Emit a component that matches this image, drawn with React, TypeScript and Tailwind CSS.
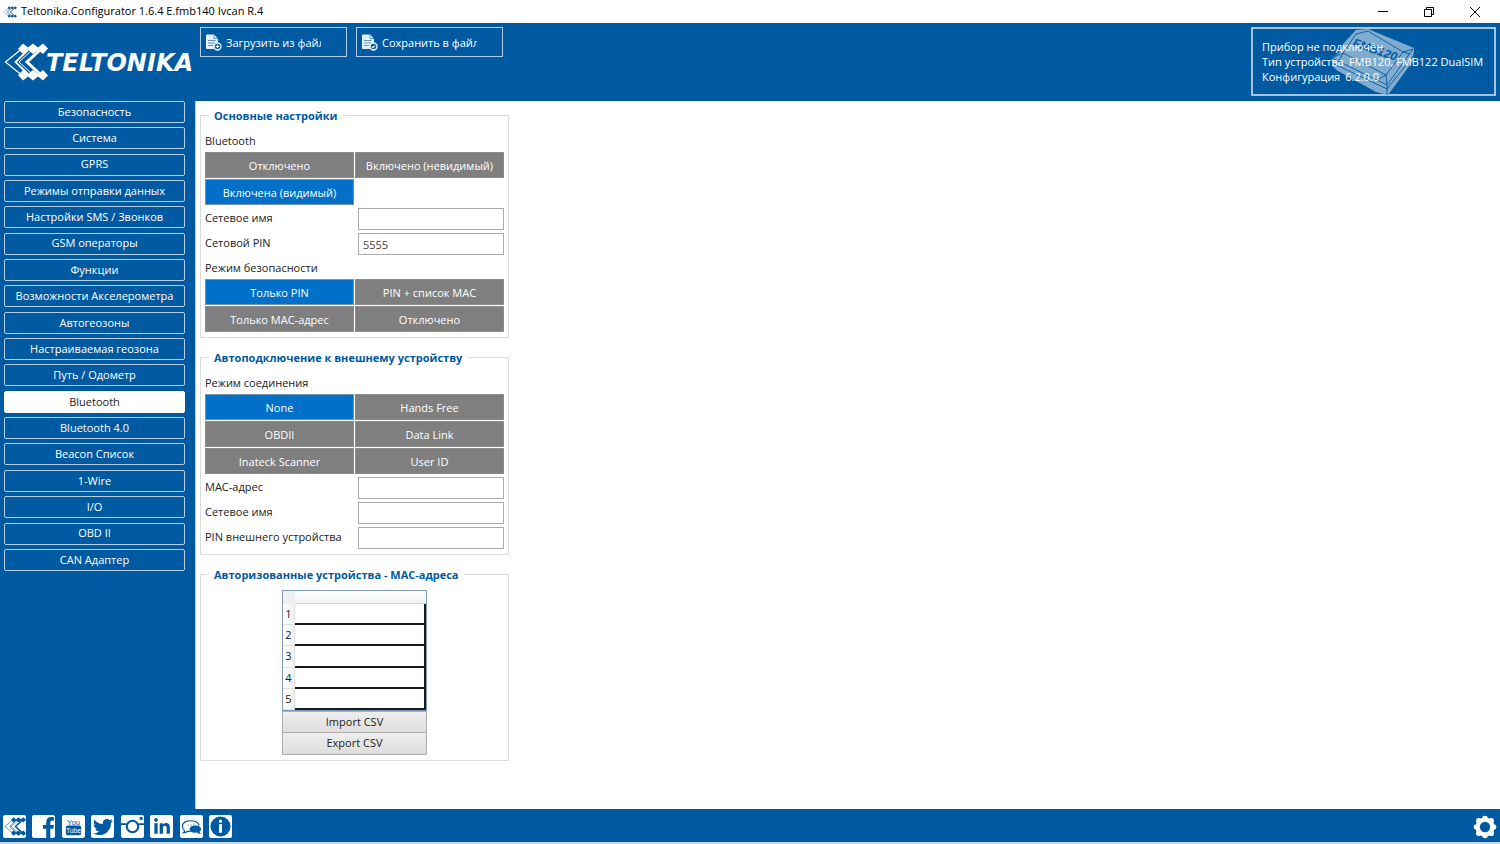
import { useState } from "react";
import type { ReactNode } from "react";
import { FaFacebookF, FaLinkedinIn, FaTwitter } from "react-icons/fa";

const NAV = [
  "Безопасность",
  "Система",
  "GPRS",
  "Режимы отправки данных",
  "Настройки SMS / Звонков",
  "GSM операторы",
  "Функции",
  "Возможности Акселерометра",
  "Автогеозоны",
  "Настраиваемая геозона",
  "Путь / Одометр",
  "Bluetooth",
  "Bluetooth 4.0",
  "Beacon Список",
  "1-Wire",
  "I/O",
  "OBD II",
  "CAN Адаптер",
];

function LogoMark({ className }: { className: string }) {
  return (
    <svg viewBox="0 0 44 38" className={className} aria-hidden="true">
      <g fill="none" stroke="currentColor">
        <path d="M17 6.500 L1.500 19 L17 31.500" strokeWidth="1.200" />
        <path d="M24 7 L11.500 19 L24 31" strokeWidth="1.800" />
        <path d="M27 8 L15 19 L27 30" strokeWidth="1" />
        <path d="M36 7 L23 19 L36 31" strokeWidth="3" />
      </g>
      <g fill="currentColor">
        <path d="M19 0.500l5 4 5-4 5 4 5-4 5 5-5 5.500-5-4-5 4-5-4-5 4-5-5z" />
        <path d="M19 37.500l5-4 5 4 5-4 5 4 5-5-5-5.500-5 4-5-4-5 4-5-4-5 5z" />
      </g>
    </svg>
  );
}

function FileIcon({ mark }: { mark: "plus" | "check" }) {
  return (
    <svg viewBox="0 0 16 17" className="h-[17px] w-4 shrink-0" aria-hidden="true">
      <path d="M1 0.500h7l4 4v9.500a1 1 0 0 1-1 1H1a1 1 0 0 1-1-1V1.500a1 1 0 0 1 1-1z" fill="#e8f0f7" />
      <path d="M8 0.500v4h4M2 6.500h7.500M2 9h7.500M2 11.500h5" fill="none" stroke="#5c95c4" strokeWidth="1" />
      <circle cx="11.500" cy="12.500" r="3.500" fill="#005aa1" stroke="#e8f0f7" strokeWidth="1.400" />
      <path d={mark === "plus" ? "M11.500 10.700v3.600M9.700 12.500h3.600" : "M9.900 12.500l1.200 1.200 2-2.200"} fill="none" stroke="#fff" strokeWidth="1.100" />
    </svg>
  );
}

function DeviceDrawing() {
  return (
    <svg viewBox="0 0 86 66" className="absolute left-[77px] top-0 h-[66px] w-[86px]" aria-hidden="true">
      <path d="M26 1 L38 0 L84 19 L83 32 L58 66 L46 63 L8 42 L2 37 L2 29 L9 24 L13 15z" fill="#80acd0" />
      <g fill="none" stroke="#005aa1" strokeWidth="0.900">
        <path d="M38 2 L26 5 L13 24 L2 29 L57 56 L83 20 L73 23 L38 2" />
        <path d="M2 34 L57 60 L84 26M57 56v10M13 24L9 32M13 24 L56 46 L73 23L80 25M56 46L47 51M56 46l1 10" />
      </g>
      <text x="22" y="17" transform="rotate(19 22 17)" fill="#005aa1" className="font-['Liberation_Sans'] text-[12px] font-bold italic">
        FMB120
      </text>
    </svg>
  );
}

function YoutubeIcon() {
  return (
    <svg viewBox="0 0 24 24" className="size-[23px]" aria-hidden="true">
      <text x="12" y="10" textAnchor="middle" fill="currentColor" className="font-['Liberation_Sans_Narrow','Liberation_Sans'] text-[8px]">You</text>
      <rect x="4" y="11" width="16" height="10" rx="2" fill="currentColor" />
      <text x="12" y="19" textAnchor="middle" fill="#fff" className="font-['Liberation_Sans_Narrow','Liberation_Sans'] text-[7px]">Tube</text>
    </svg>
  );
}

function CameraIcon() {
  return (
    <svg viewBox="0 0 24 24" className="size-[23px]" aria-hidden="true">
      <path d="M0 9.500h6M18 9.500h6" stroke="currentColor" strokeWidth="2" />
      <circle cx="12" cy="12" r="6" fill="none" stroke="currentColor" strokeWidth="2.200" />
      <rect x="19.500" y="2" width="3" height="3" fill="currentColor" />
    </svg>
  );
}

function ChatIcon() {
  return (
    <svg viewBox="0 0 24 24" className="size-[23px]" aria-hidden="true">
      <path d="M5 17l-1.500 1.500c2 0 3.500-.5 4.500-1.500h3M5 16.500C3 15.300 2.500 13.500 2.500 11.500 2.500 8 6.500 6 11 6s8.500 2 9 5" fill="none" stroke="currentColor" strokeWidth="1.300" />
      <path d="M16 11c3.500 0 6 1.600 6 3.800 0 1.300-.8 2.200-1.800 2.800l1.500 2.200c-2 0-3.200-.7-4-1.500-4.500.6-7.700-1-7.700-3.500C10 12.600 12.500 11 16 11z" fill="currentColor" />
      <path d="M8 10.500h1M11 10.500h1M14 9.500h1" stroke="currentColor" />
    </svg>
  );
}

function InfoIcon() {
  return (
    <svg viewBox="0 0 24 24" className="size-[23px]" aria-hidden="true">
      <circle cx="12" cy="12" r="10.500" fill="currentColor" />
      <rect x="10.500" y="9.500" width="3" height="9" fill="#fff" />
      <rect x="10.500" y="5" width="3" height="3" rx="1" fill="#fff" />
    </svg>
  );
}

function GearIcon() {
  return (
    <svg viewBox="0 0 24 24" className="size-6" aria-hidden="true">
      <g fill="#fff">
        <circle cx="12" cy="12" r="9.500" />
        <circle cx="12" cy="3.500" r="2.800" />
        <circle cx="18.200" cy="5.800" r="2.800" />
        <circle cx="20.500" cy="12" r="2.800" />
        <circle cx="18.200" cy="18.200" r="2.800" />
        <circle cx="12" cy="20.500" r="2.800" />
        <circle cx="5.800" cy="18.200" r="2.800" />
        <circle cx="3.500" cy="12" r="2.800" />
        <circle cx="5.800" cy="5.800" r="2.800" />
      </g>
      <circle cx="12" cy="12" r="5.200" fill="#005aa1" />
    </svg>
  );
}

const SOCIAL: { label: string; icon: ReactNode }[] = [
  { label: "Teltonika", icon: <LogoMark className="h-[19px] w-[22px]" /> },
  { label: "Facebook", icon: <FaFacebookF className="ml-[10px] mt-[2px] size-[21px]" /> },
  { label: "YouTube", icon: <YoutubeIcon /> },
  { label: "Twitter", icon: <FaTwitter className="size-5" /> },
  { label: "Instagram", icon: <CameraIcon /> },
  { label: "LinkedIn", icon: <FaLinkedinIn className="size-[18px]" /> },
  { label: "Форум", icon: <ChatIcon /> },
  { label: "Информация", icon: <InfoIcon /> },
];

function Panel({ title, children }: { title: string; children: ReactNode }) {
  return (
    <fieldset className="w-[309px] border border-[#dcdcdc] px-1 pb-[5px]">
      <legend className="ml-1 px-[5px] pt-px text-[11px] leading-4 font-bold text-[#005aa1]">{title}</legend>
      {children}
    </fieldset>
  );
}

function Choice({ label, options, initial }: { label: string; options: string[]; initial: string }) {
  const [value, setValue] = useState(initial);
  return (
    <div role="group" aria-label={label} className="pt-2">
      <div className="mb-0.5 leading-[18px]">{label}</div>
      <div className="grid grid-cols-2 gap-px">
        {options.map((o) => (
          <button
            key={o}
            type="button"
            aria-pressed={o === value}
            onClick={() => setValue(o)}
            className={
              o === value
                ? "h-[26px] border border-[#7593ad] bg-[#0070c8] pt-0.5 text-white"
                : "h-[26px] border border-[#8c8c8c] bg-[#7f7f7f] pt-0.5 text-white"
            }
          >
            {o}
          </button>
        ))}
      </div>
    </div>
  );
}

function Field({ id, label, value }: { id: string; label: string; value?: string }) {
  return (
    <div className="flex items-start justify-between">
      <label htmlFor={id} className="leading-5">{label}</label>
      <input id={id} defaultValue={value} className="h-[22px] w-[146px] border border-[#ababab] bg-white px-1 text-[#444]" />
    </div>
  );
}

export default function App() {
  const [page, setPage] = useState("Bluetooth");

  return (
    <div className="flex min-h-screen flex-col bg-[#005aa1] font-['Open_Sans','Noto_Sans',sans-serif] text-[11px] text-[#222]">
      <div className="flex h-[23px] items-center bg-white pr-0.5 pl-0.5 text-black">
        <LogoMark className="h-3 w-4 text-[#1d5a94]" />
        <span className="ml-[3px] flex-1">Teltonika.Configurator 1.6.4 E.fmb140 Ivcan R.4</span>
        <button type="button" aria-label="Свернуть" className="flex w-[46px] justify-center">
          <svg viewBox="0 0 10 10" className="size-[10px]"><path d="M0 4.500h10" stroke="#000" /></svg>
        </button>
        <button type="button" aria-label="Развернуть" className="flex w-[46px] justify-center">
          <svg viewBox="0 0 10 10" className="size-[10px]" fill="none" stroke="#000"><path d="M.5 2.500h7v7h-7zM2.500 2.500v-2h7v7h-2" /></svg>
        </button>
        <button type="button" aria-label="Закрыть" className="flex w-[46px] justify-center">
          <svg viewBox="0 0 10 10" className="size-[10px]"><path d="M0 0l10 10M10 0L0 10" stroke="#000" /></svg>
        </button>
      </div>

      <header className="flex h-[78px] items-start pt-1 pr-1 text-white">
        <div className="flex w-[200px] shrink-0 items-center pt-4 pl-1">
          <LogoMark className="h-[38px] w-[44px] shrink-0" />
          <span className="-ml-0.5 pt-0.5 font-['DejaVu_Sans',sans-serif] text-[24px] leading-9 font-bold italic">TELTONIKA</span>
        </div>
        <div className="flex gap-[9px]">
          <button type="button" className="flex h-[30px] w-[147px] items-center border border-[#b5cee3] px-[5px]">
            <FileIcon mark="plus" />
            <span className="ml-1 w-[95px] overflow-hidden pt-0.5 text-left whitespace-nowrap">Загрузить из файла</span>
          </button>
          <button type="button" className="flex h-[30px] w-[147px] items-center border border-[#b5cee3] px-[5px]">
            <FileIcon mark="check" />
            <span className="ml-1 w-[95px] overflow-hidden pt-0.5 text-left whitespace-nowrap">Сохранить в файл</span>
          </button>
        </div>
        <div className="relative ml-auto h-[69px] w-[245px] border-2 border-[#a6c4dd] pt-[10px] pl-[9px]">
          <DeviceDrawing />
          <div className="relative leading-[15px] whitespace-nowrap">
            <div>Прибор не подключён</div>
            <div className="flex gap-[5px]"><span>Тип устройства</span><span>FMB120, FMB122 DualSIM</span></div>
            <div className="flex gap-[5px]"><span>Конфигурация</span><span>6.2.0.0</span></div>
          </div>
        </div>
      </header>

      <div className="flex flex-1">
        <nav className="flex h-[470px] w-[195px] shrink-0 flex-col justify-between pr-[10px] pl-1">
          {NAV.map((n) => (
            <button
              key={n}
              type="button"
              onClick={() => setPage(n)}
              className={
                n === page
                  ? "h-[22px] rounded-xs border border-white bg-white text-[#222]"
                  : "h-[22px] rounded-xs border border-[#b5cee3] text-white"
              }
            >
              {n}
            </button>
          ))}
        </nav>

        <main className="flex flex-1 flex-col gap-[11px] border-l border-[#b0cbe4] bg-white pt-[6px] pl-1">
          <Panel title="Основные настройки">
            <Choice label="Bluetooth" options={["Отключено", "Включено (невидимый)", "Включена (видимый)"]} initial="Включена (видимый)" />
            <div className="mt-[3px] -mb-1 flex flex-col gap-[3px]">
              <Field id="net-name" label="Сетевое имя" />
              <Field id="net-pin" label="Сетовой PIN" value="5555" />
            </div>
            <Choice label="Режим безопасности" options={["Только PIN", "PIN + список MAC", "Только MAC-адрес", "Отключено"]} initial="Только PIN" />
          </Panel>

          <Panel title="Автоподключение к внешнему устройству">
            <Choice label="Режим соединения" options={["None", "Hands Free", "OBDII", "Data Link", "Inateck Scanner", "User ID"]} initial="None" />
            <div className="mt-[3px] flex flex-col gap-[3px]">
              <Field id="mac" label="MAC-адрес" />
              <Field id="ext-name" label="Сетевое имя" />
              <Field id="ext-pin" label="PIN внешнего устройства" />
            </div>
          </Panel>

          <Panel title="Авторизованные устройства - MAC-адреса">
            <div className="mx-auto mt-[7px] w-[145px]">
              <table className="h-[121px] w-full border-separate border-spacing-0 border border-[#7f9db9]">
                <thead>
                  <tr>
                    <th className="h-[13px] w-3 bg-[#f0f0f0] p-0" />
                    <th className="border-b border-[#d5d5d5] bg-linear-to-b from-white to-[#f0f1f3] p-0" />
                  </tr>
                </thead>
                <tbody>
                  {[1, 2, 3, 4, 5].map((n) => (
                    <tr key={n}>
                      <th scope="row" className="border-r border-b border-[#e0e0e0] bg-linear-to-r from-white to-[#f0f1f3] p-0 text-center leading-5 font-normal">{n}</th>
                      <td className="border-r-2 border-b-2 border-[#1a1a1a] bg-white p-0" />
                    </tr>
                  ))}
                </tbody>
              </table>
              <button type="button" className="block h-[22px] w-full border border-[#adadad] bg-linear-to-b from-[#eeeeee] to-[#dedede]">Import CSV</button>
              <button type="button" className="block h-[22px] w-full border border-t-0 border-[#adadad] bg-linear-to-b from-[#eeeeee] to-[#dedede]">Export CSV</button>
            </div>
          </Panel>
        </main>
      </div>

      <footer className="flex h-[35px] items-center justify-between border-b-2 border-[#c5d8e8] px-[3px] pt-0.5">
        <div className="flex w-[229px] justify-between">
          {SOCIAL.map((s) => (
            <a key={s.label} href="#" aria-label={s.label} className="flex size-[23px] items-center justify-center overflow-hidden rounded-xs bg-white text-[#005aa1]">
              {s.icon}
            </a>
          ))}
        </div>
        <button type="button" aria-label="Настройки">
          <GearIcon />
        </button>
      </footer>
    </div>
  );
}
